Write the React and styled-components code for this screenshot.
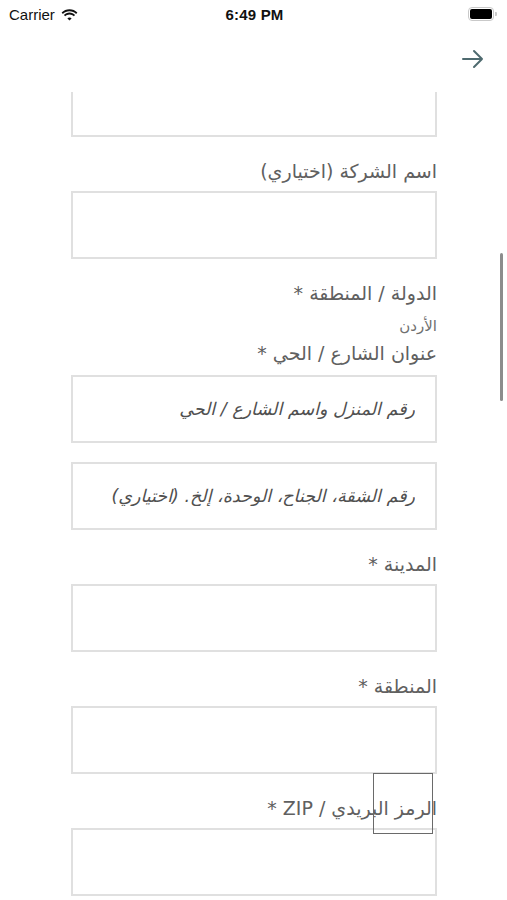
import React from "react";
import styled, { createGlobalStyle } from "styled-components";

const GlobalStyle = createGlobalStyle`
  html, body {
    margin: 0;
    padding: 0;
    background: #ffffff;
  }
  body {
    font-family: "DejaVu Sans", "Liberation Sans", sans-serif;
  }
`;

const fields = [
  { key: "prev", label: null },
  { key: "company", label: "اسم الشركة (اختياري)" },
  {
    key: "street",
    label: "عنوان الشارع / الحي *",
    country: { label: "الدولة / المنطقة *", value: "الأردن" },
    placeholder: "رقم المنزل واسم الشارع / الحي",
  },
  { key: "street2", label: null, placeholder: "رقم الشقة، الجناح، الوحدة، إلخ. (اختياري)", tight: true },
  { key: "city", label: "المدينة *" },
  { key: "region", label: "المنطقة *" },
  { key: "zip", label: "الرمز البريدي / ZIP *", marker: true },
];

function App() {
  return (
    <>
      <GlobalStyle />
      <Screen>
        <StatusBar>
          <Carrier>
            Carrier
            <svg width="17" height="12" viewBox="0 0 17 12">
              <path
                d="M8.5 2.2c2.6 0 4.9 1 6.6 2.7l1.3-1.3C14.3 1.5 11.5.3 8.5.3S2.7 1.5.6 3.6l1.3 1.3C3.6 3.2 5.9 2.2 8.5 2.2z"
                fill="#111"
              />
              <path
                d="M8.5 5.4c1.7 0 3.2.7 4.3 1.8l1.3-1.3C12.7 4.5 10.7 3.5 8.5 3.5S4.3 4.5 2.9 5.9l1.3 1.3c1.1-1.1 2.6-1.8 4.3-1.8z"
                fill="#111"
              />
              <path
                d="M8.5 8.5c.9 0 1.6.3 2.1.9L8.5 11.6 6.4 9.4c.5-.6 1.2-.9 2.1-.9z"
                fill="#111"
              />
            </svg>
          </Carrier>
          <Clock>6:49 PM</Clock>
          <Battery>
            <BatteryBody>
              <BatteryFill />
            </BatteryBody>
            <BatteryCap />
          </Battery>
        </StatusBar>

        <NavBar>
          <BackButton aria-label="back">
            <svg width="24" height="22" viewBox="0 0 24 22" fill="none">
              <path
                d="M2 11h19M13 3l8 8-8 8"
                stroke="#4e6a6f"
                strokeWidth="2"
                strokeLinecap="round"
                strokeLinejoin="round"
              />
            </svg>
          </BackButton>
        </NavBar>

        <ScrollArea>
          <Form dir="rtl">
            {fields.map((f) => (
              <Field key={f.key} $tight={f.tight} $first={f.key === "prev"}>
                {f.country && (
                  <>
                    <Label>{f.country.label}</Label>
                    <CountryValue>{f.country.value}</CountryValue>
                  </>
                )}
                {f.label && <Label $compact={!!f.country}>{f.label}</Label>}
                <Input placeholder={f.placeholder || ""} />
                {f.marker && <Marker />}
              </Field>
            ))}
          </Form>
          <ScrollThumb />
        </ScrollArea>
      </Screen>
    </>
  );
}

export default App;

const Screen = styled.div`
  width: 507px;
  height: 900px;
  display: flex;
  flex-direction: column;
  overflow: hidden;
  background: #fff;
`;

const StatusBar = styled.div`
  height: 28px;
  display: grid;
  grid-template-columns: 1fr auto 1fr;
  align-items: center;
  padding: 0 9px;
  font-family: "Liberation Sans", Arial, sans-serif;
  font-size: 15px;
  color: #111;
`;

const Carrier = styled.div`
  display: flex;
  align-items: center;
  gap: 6px;
  padding-top: 1px;
`;

const Clock = styled.div`
  font-weight: bold;
  letter-spacing: 0.2px;
  padding-left: 2px;
`;

const Battery = styled.div`
  justify-self: end;
  display: flex;
  align-items: center;
  gap: 1px;
  padding-right: 1px;
`;

const BatteryBody = styled.div`
  width: 22px;
  height: 10px;
  border: 1.5px solid #c9c9c9;
  border-radius: 4px;
  padding: 1px;
  display: flex;
`;

const BatteryFill = styled.div`
  flex: 1;
  background: #000;
  border-radius: 2px;
`;

const BatteryCap = styled.div`
  width: 2px;
  height: 4px;
  background: #c9c9c9;
  border-radius: 0 1px 1px 0;
`;

const NavBar = styled.div`
  height: 64px;
  display: flex;
  align-items: center;
  justify-content: flex-end;
  padding-right: 22px;
  padding-bottom: 2px;
  box-sizing: border-box;
`;

const BackButton = styled.button`
  border: none;
  background: none;
  padding: 0;
  display: flex;
  cursor: pointer;
`;

const ScrollArea = styled.div`
  position: relative;
  flex: 1;
  overflow: hidden;
`;

const Form = styled.div`
  display: flex;
  flex-direction: column;
  padding: 0 70px 0 71px;
  margin-top: -23px;
`;

const Field = styled.div`
  position: relative;
  display: flex;
  flex-direction: column;
  margin-top: ${(p) => (p.$first ? "0" : p.$tight ? "19px" : "22px")};
`;

const Label = styled.div`
  font-size: 19px;
  line-height: 24px;
  color: #606060;
  text-align: right;
  margin-bottom: ${(p) => (p.$compact ? "10px" : "8px")};
`;

const CountryValue = styled.div`
  font-size: 15px;
  line-height: 18px;
  color: #707070;
  text-align: right;
  margin: 4px 0 6px;
`;

const Input = styled.input`
  box-sizing: border-box;
  width: 100%;
  height: 68px;
  border: 2px solid #e0e0e0;
  border-radius: 0;
  background: #fff;
  padding: 0 20px;
  font-family: "DejaVu Sans", sans-serif;
  font-size: 17.5px;
  font-style: italic;
  text-align: right;
  outline: none;

  &::placeholder {
    color: #505050;
    opacity: 1;
  }
`;

const Marker = styled.div`
  position: absolute;
  left: 302px;
  top: -23px;
  width: 60px;
  height: 61px;
  box-sizing: border-box;
  border: 1.5px solid #6a6a6a;
  pointer-events: none;
`;

const ScrollThumb = styled.div`
  position: absolute;
  right: 4px;
  top: 161px;
  width: 3px;
  height: 148px;
  border-radius: 2px;
  background: #8c8c8c;
`;
